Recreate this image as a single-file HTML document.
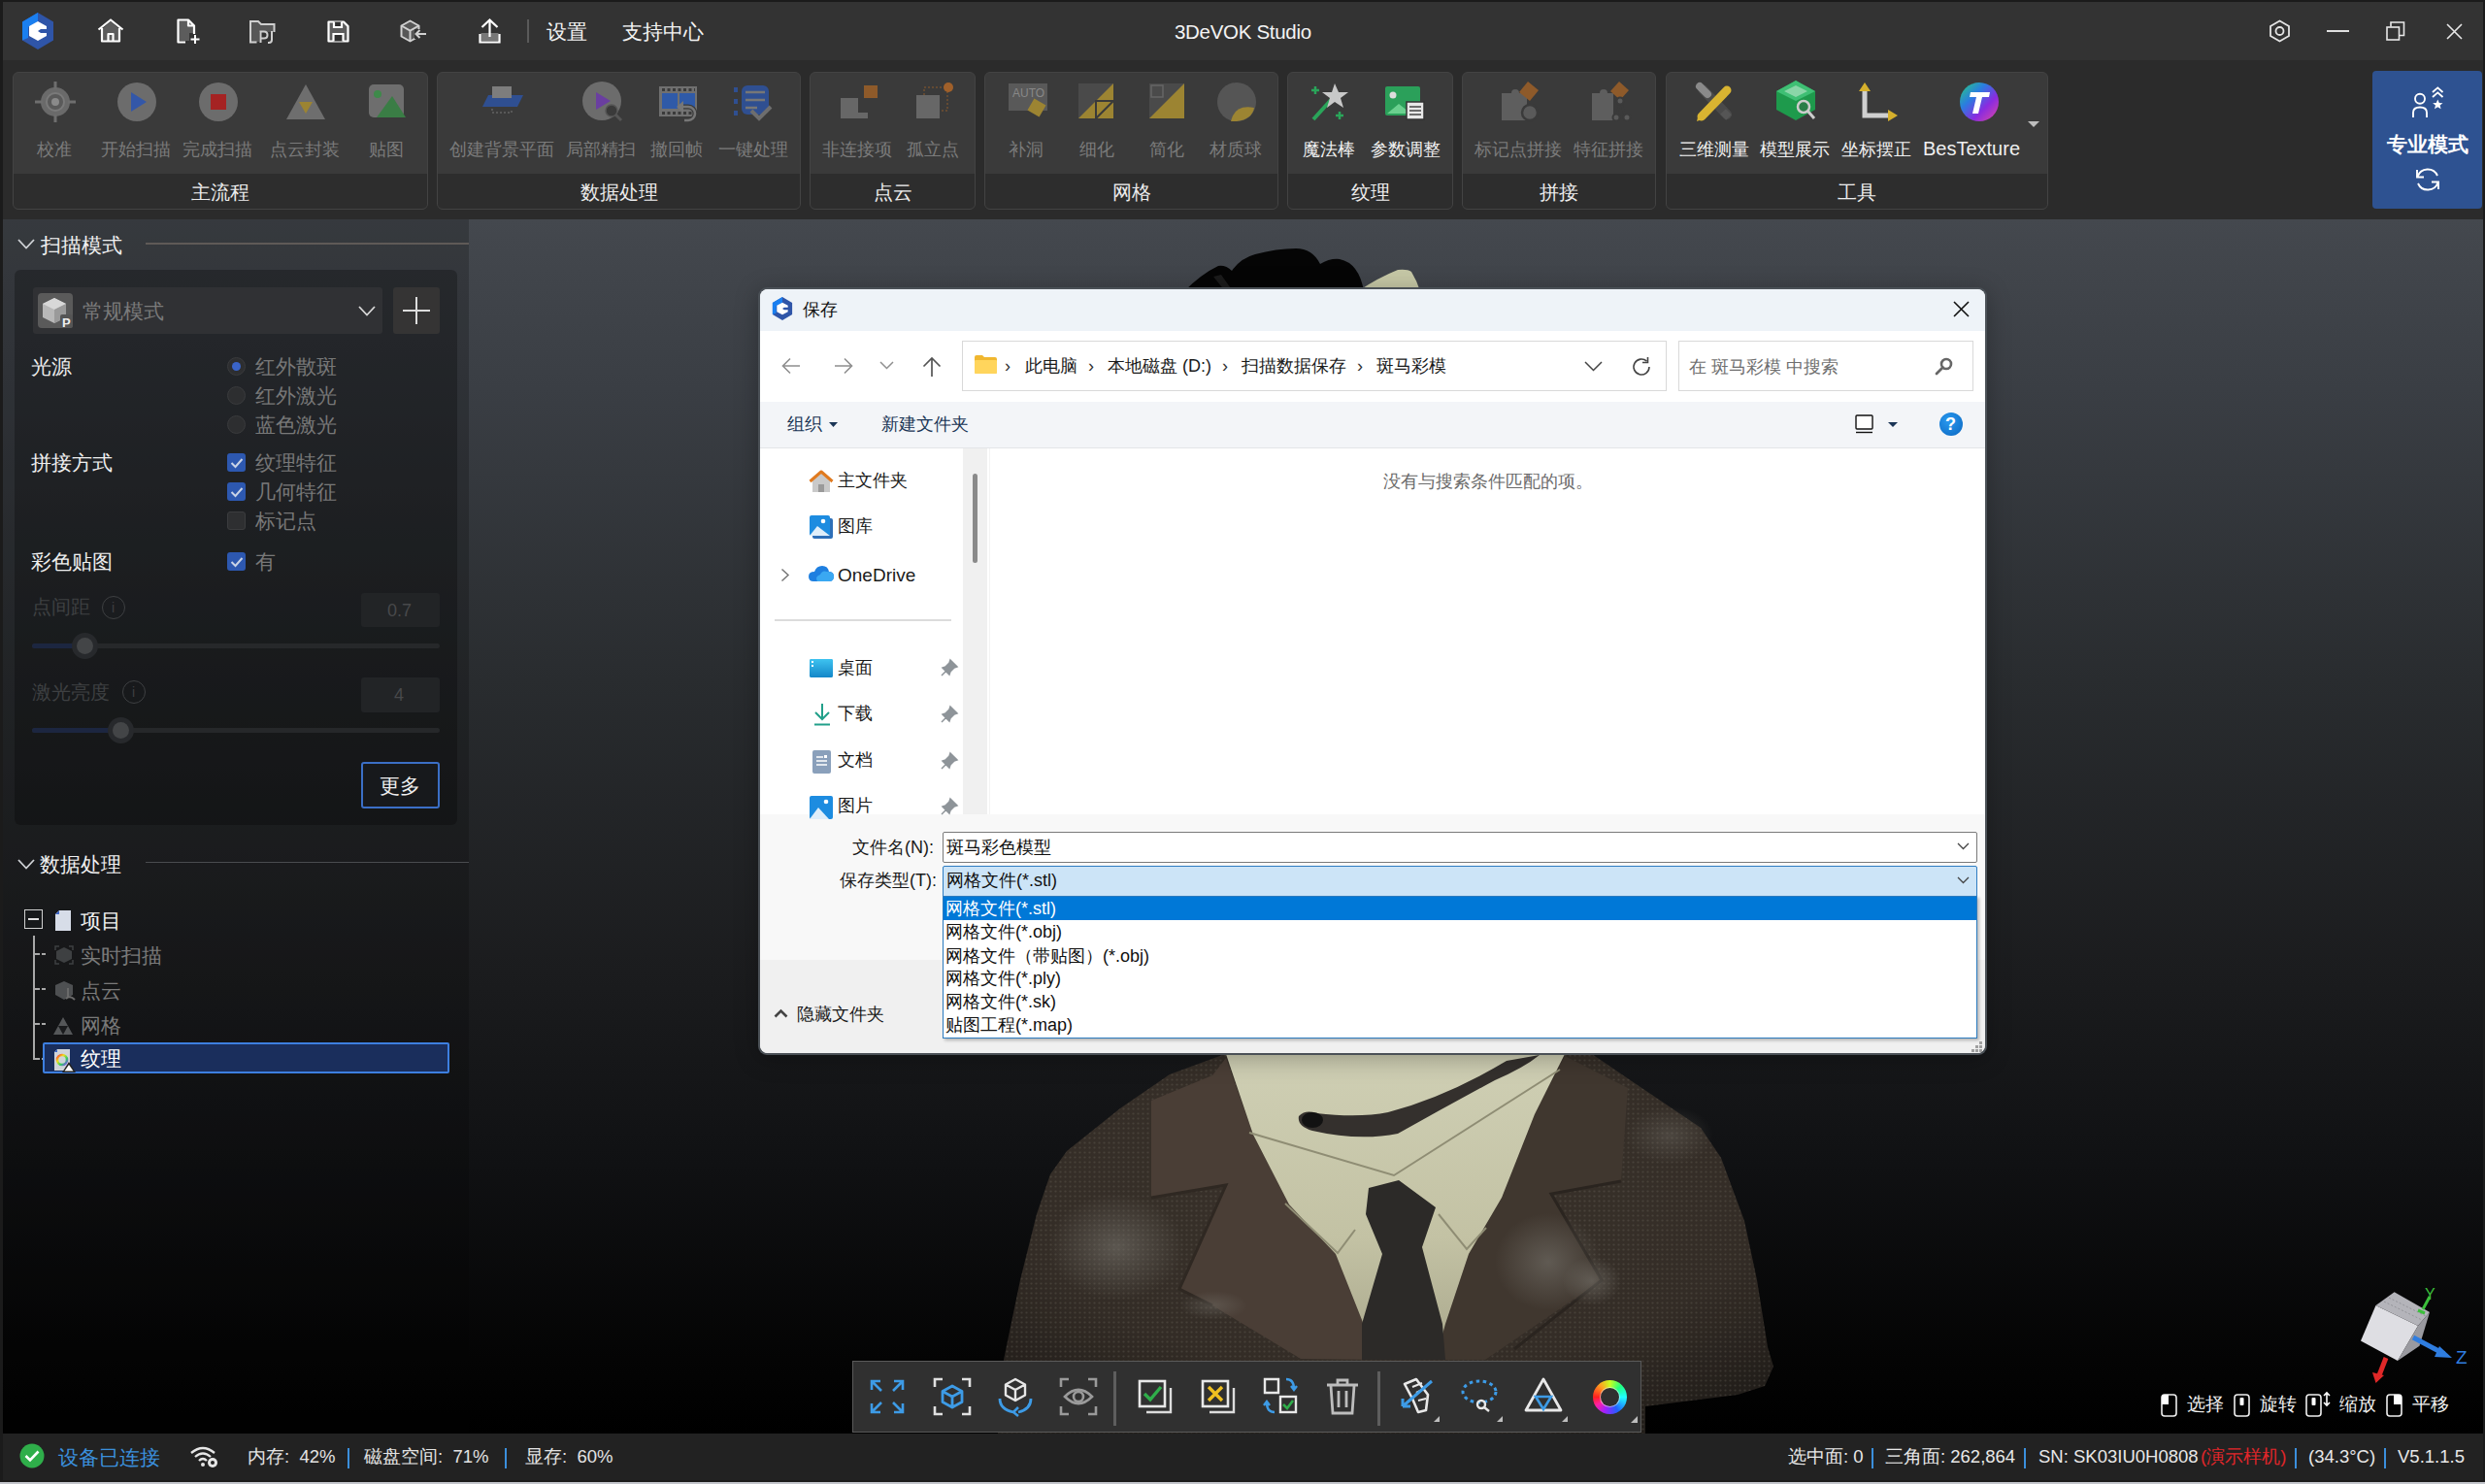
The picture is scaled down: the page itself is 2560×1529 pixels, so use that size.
<!DOCTYPE html>
<html><head><meta charset="utf-8">
<style>
*{box-sizing:border-box;margin:0;padding:0}
html,body{width:2560px;height:1529px;overflow:hidden;background:#1b1b1b;font-family:"Liberation Sans",sans-serif}
.a{position:absolute}
.t{position:absolute;white-space:nowrap;line-height:1}
svg{position:absolute;overflow:visible}
#titlebar{position:absolute;left:3px;top:2px;width:2555px;height:60px;background:#333333}
#ribbon{position:absolute;left:3px;top:62px;width:2555px;height:164px;background:#2b2b2b}
.grp{position:absolute;top:74px;height:142px;border:1px solid #434343;border-radius:6px;background:#3a3a3a;overflow:hidden}
.grp .band{position:absolute;left:0;right:0;bottom:0;height:36px;background:#2d2d2d}
.grp .gl{position:absolute;left:0;right:0;bottom:7px;text-align:center;color:#ececec;font-size:20px;line-height:20px;white-space:nowrap}
.rl{position:absolute;top:145px;font-size:18px;line-height:18px;color:#7b7b7b;white-space:nowrap;transform:translateX(-50%)}
.rl.on{color:#f0f0f0}
#viewport{position:absolute;left:3px;top:226px;width:2555px;height:1251px;background:linear-gradient(#44484e 0%,#3a3e44 13.9%,#292c2f 37.9%,#1b1c1e 61.9%,#101113 77.9%,#040404 93.8%,#000 100%)}
#status{position:absolute;left:3px;top:1477px;width:2555px;height:48px;background:#222222}
#botline{position:absolute;left:0;top:1527px;width:2560px;height:2px;background:#c4c6cc}
</style></head><body>

<!-- ============ TITLE BAR ============ -->
<div id="titlebar"></div>
<!-- logo -->
<svg style="left:22px;top:13px" width="34" height="38" viewBox="0 0 34 38">
  <polygon points="17,0 33,9.5 33,28.5 17,38 1,28.5 1,9.5" fill="#2f55a8"/>
  <polygon points="17,0 17,9 7,15 7,26 1,28.5 1,9.5" fill="#1a7ff0"/>
  <polygon points="17,9 26,14 26,17 20,17 17,19 20,21 26,21 26,24 17,29 8,24 8,14" fill="#fff"/>
</svg>
<!-- home -->
<svg style="left:100px;top:19px" width="28" height="25" viewBox="0 0 28 25">
  <path d="M5,11 V23 H23 V11 L14,3 Z" fill="#5c5c5c"/>
  <path d="M1.5,11.5 L14,1.5 L26.5,11.5 M5,10 V23.5 H23 V10 M11.5,23.5 V16 H16.5 V23.5" fill="none" stroke="#fff" stroke-width="2.2" stroke-linejoin="round"/>
</svg>
<!-- new file -->
<svg style="left:182px;top:19px" width="24" height="27" viewBox="0 0 24 27">
  <path d="M1.5,1.5 H12 L17,6.5 V15 H13 V23 H1.5 Z" fill="#5c5c5c"/>
  <path d="M9,24.5 H1.5 V1.5 H12 L18,7.5 V16 M12,1.5 V7.5 H18" fill="none" stroke="#fff" stroke-width="2.2" stroke-linejoin="round"/>
  <path d="M19,17 V26 M14.5,21.5 H23.5" stroke="#fff" stroke-width="2"/>
</svg>
<!-- project folder -->
<svg style="left:257px;top:21px" width="27" height="24" viewBox="0 0 27 24">
  <path d="M1,1 H9 L12,4 H25 V12 H10 V22 H1 Z" fill="#575757"/>
  <path d="M7.5,22.5 H1 V1 H9 L12,4 H25.5 V12" fill="none" stroke="#cfcfcf" stroke-width="2"/>
  <path d="M11.5,23 V11.5 H15 Q18.5,11.5 18.5,15 Q18.5,18.5 15,18.5 H11.5" fill="none" stroke="#cfcfcf" stroke-width="2"/>
  <path d="M23,11 V20 Q23,23 20,23 H19" fill="none" stroke="#cfcfcf" stroke-width="2"/>
</svg>
<!-- save -->
<svg style="left:337px;top:21px" width="23" height="23" viewBox="0 0 23 23">
  <path d="M1.5,1.5 H17 L21.5,6 V21.5 H1.5 Z" fill="#5c5c5c" stroke="#fff" stroke-width="2.2" stroke-linejoin="round"/>
  <path d="M7,1.5 V7 H15 V1.5 M6.5,21.5 V14 H16.5 V21.5" fill="#2f2f2f" stroke="#fff" stroke-width="2.2"/>
</svg>
<!-- import cube -->
<svg style="left:412px;top:20px" width="28" height="25" viewBox="0 0 28 25">
  <path d="M10.5,1.5 L19.5,6.5 V17.5 L10.5,22.5 L1.5,17.5 V6.5 Z" fill="#575757" stroke="#d0d0d0" stroke-width="2" stroke-linejoin="round"/>
  <path d="M1.5,6.5 L10.5,11.5 L19.5,6.5 M10.5,11.5 V22.5" fill="none" stroke="#d0d0d0" stroke-width="2"/>
  <rect x="15" y="10" width="13" height="10" fill="#333"/>
  <path d="M27,15 H17 M20.5,11 L16.5,15 L20.5,19" fill="none" stroke="#d0d0d0" stroke-width="2"/>
</svg>
<!-- export -->
<svg style="left:493px;top:19px" width="23" height="26" viewBox="0 0 23 26">
  <rect x="2.5" y="15" width="18" height="8" fill="#777"/>
  <path d="M1.5,16 V24.5 H21.5 V16" fill="none" stroke="#fff" stroke-width="2.2"/>
  <path d="M11.5,19 V2 M3.5,9 L11.5,1.5 L19.5,9" fill="none" stroke="#fff" stroke-width="2.2"/>
</svg>
<div class="a" style="left:543px;top:20px;width:2px;height:24px;background:#5a5a5a"></div>
<div class="t" style="left:563px;top:22px;font-size:21px;color:#f2f2f2">设置</div>
<div class="t" style="left:641px;top:22px;font-size:21px;color:#f2f2f2">支持中心</div>
<div class="t" style="left:1210px;top:23px;font-size:20.5px;color:#f4f4f4;letter-spacing:-0.3px">3DeVOK Studio</div>
<!-- right window buttons -->
<svg style="left:2337px;top:20px" width="23" height="24" viewBox="0 0 23 24">
  <polygon points="11.5,1.5 21,7 21,17 11.5,22.5 2,17 2,7" fill="none" stroke="#e4e4e4" stroke-width="1.8"/>
  <circle cx="11.5" cy="12" r="4" fill="none" stroke="#e4e4e4" stroke-width="1.8"/>
</svg>
<div class="a" style="left:2397px;top:31px;width:23px;height:2px;background:#e0e0e0"></div>
<svg style="left:2458px;top:22px" width="20" height="20" viewBox="0 0 20 20">
  <rect x="1" y="6" width="12.5" height="13" fill="none" stroke="#e8e8e8" stroke-width="1.6"/>
  <path d="M5,5.5 V1 H18.5 V14.5 H14" fill="none" stroke="#e8e8e8" stroke-width="1.6"/>
</svg>
<svg style="left:2520px;top:24px" width="17" height="17" viewBox="0 0 17 17">
  <path d="M1,1 L16,16 M16,1 L1,16" stroke="#e8e8e8" stroke-width="1.6"/>
</svg>

<!-- ============ RIBBON ============ -->
<div id="ribbon"></div>
<div class="grp" style="left:13px;width:428px"><div class="band"></div><div class="gl">主流程</div></div>
<div class="grp" style="left:450px;width:375px"><div class="band"></div><div class="gl">数据处理</div></div>
<div class="grp" style="left:834px;width:171px"><div class="band"></div><div class="gl">点云</div></div>
<div class="grp" style="left:1014px;width:303px"><div class="band"></div><div class="gl">网格</div></div>
<div class="grp" style="left:1326px;width:171px"><div class="band"></div><div class="gl">纹理</div></div>
<div class="grp" style="left:1506px;width:200px"><div class="band"></div><div class="gl">拼接</div></div>
<div class="grp" style="left:1716px;width:394px"><div class="band"></div><div class="gl">工具</div></div>

<div class="rl" style="left:56px">校准</div>
<div class="rl" style="left:140px">开始扫描</div>
<div class="rl" style="left:224px">完成扫描</div>
<div class="rl" style="left:314px">点云封装</div>
<div class="rl" style="left:398px">贴图</div>
<div class="rl" style="left:517px">创建背景平面</div>
<div class="rl" style="left:619px">局部精扫</div>
<div class="rl" style="left:697px">撤回帧</div>
<div class="rl" style="left:776px">一键处理</div>
<div class="rl" style="left:883px">非连接项</div>
<div class="rl" style="left:961px">孤立点</div>
<div class="rl" style="left:1057px">补洞</div>
<div class="rl" style="left:1130px">细化</div>
<div class="rl" style="left:1202px">简化</div>
<div class="rl" style="left:1273px">材质球</div>
<div class="rl on" style="left:1369px">魔法棒</div>
<div class="rl on" style="left:1448px">参数调整</div>
<div class="rl" style="left:1564px">标记点拼接</div>
<div class="rl" style="left:1657px">特征拼接</div>
<div class="rl on" style="left:1766px">三维测量</div>
<div class="rl on" style="left:1849px">模型展示</div>
<div class="rl on" style="left:1933px">坐标摆正</div>
<div class="rl on" style="left:2031px;font-size:20px;top:144px">BesTexture</div>

<!-- ribbon icons -->
<!-- 校准 -->
<svg style="left:35px;top:83px" width="44" height="44" viewBox="0 0 44 44">
  <circle cx="22" cy="22" r="15" fill="#6a6a6a"/><circle cx="22" cy="22" r="9" fill="#5a5a5a" stroke="#7a7a7a" stroke-width="2"/><circle cx="22" cy="22" r="4" fill="#8a8a8a"/>
  <path d="M22,1 V9 M22,35 V43 M1,22 H9 M35,22 H43" stroke="#6e6e6e" stroke-width="3"/>
</svg>
<!-- 开始扫描 -->
<svg style="left:120px;top:84px" width="42" height="42" viewBox="0 0 42 42">
  <circle cx="21" cy="21" r="20" fill="#6c6c6c"/><polygon points="15,11 31,21 15,31" fill="#3357a8"/>
</svg>
<!-- 完成扫描 -->
<svg style="left:204px;top:84px" width="42" height="42" viewBox="0 0 42 42">
  <circle cx="21" cy="21" r="20" fill="#6c6c6c"/><rect x="13" y="13" width="16" height="16" fill="#a52323"/>
</svg>
<!-- 点云封装 -->
<svg style="left:294px;top:86px" width="42" height="38" viewBox="0 0 42 38">
  <polygon points="21,1 41,37 1,37" fill="#6e6e6e"/><polygon points="14,19 28,19 21,31" fill="#9c8432"/>
</svg>
<!-- 贴图 -->
<svg style="left:380px;top:87px" width="38" height="36" viewBox="0 0 38 36">
  <rect x="0" y="0" width="36" height="34" rx="5" fill="#6e6e6e"/><circle cx="9" cy="10" r="4" fill="#3e8a4a"/><polygon points="8,34 24,12 38,34" fill="#3a7d45"/>
</svg>
<!-- 创建背景平面 -->
<svg style="left:497px;top:88px" width="42" height="34" viewBox="0 0 42 34">
  <polygon points="6,10 42,10 36,22 0,22" fill="#2f4f91"/><rect x="10" y="1" width="20" height="12" fill="#7d7d7d"/><path d="M10,24 V28 H30 V24" fill="none" stroke="#777" stroke-width="1" stroke-dasharray="2,2"/>
</svg>
<!-- 局部精扫 -->
<svg style="left:600px;top:84px" width="42" height="42" viewBox="0 0 42 42">
  <circle cx="20" cy="20" r="20" fill="#6c6c6c"/><polygon points="14,11 29,20 14,29" fill="#6a3ea0"/><circle cx="30" cy="30" r="6" fill="#3a3a3a" stroke="#555" stroke-width="1.5"/><path d="M34,34 L40,40" stroke="#555" stroke-width="3"/>
</svg>
<!-- 撤回帧 -->
<svg style="left:679px;top:88px" width="42" height="40" viewBox="0 0 42 40">
  <rect x="0" y="1" width="39" height="31" fill="#707070"/>
  <rect x="3" y="8" width="16" height="16" fill="#2f5aa8"/><rect x="21" y="8" width="16" height="16" fill="#2f5aa8"/>
  <path d="M3,4.5 H37 M3,28.5 H37" stroke="#3a3a3a" stroke-width="3" stroke-dasharray="3,2.5"/>
  <path d="M22,22 H30 A7,7 0 0 1 30,36 H26" fill="none" stroke="#3a3a3a" stroke-width="5"/>
  <path d="M22,22 H30 A7,7 0 0 1 30,36 H26" fill="none" stroke="#777" stroke-width="2.5"/>
  <polygon points="18,22 25,16 25,28" fill="#777"/>
</svg>
<!-- 一键处理 -->
<svg style="left:756px;top:88px" width="42" height="38" viewBox="0 0 42 38">
  <rect x="0" y="2" width="4" height="5" fill="#2f4f91"/><rect x="0" y="14" width="4" height="5" fill="#2f4f91"/><rect x="0" y="26" width="4" height="5" fill="#2f4f91"/><rect x="8" y="0" width="28" height="30" rx="6" fill="#2f4f91"/><path d="M12,7 H32 M12,15 H32 M12,23 H24" stroke="#777" stroke-width="2.5"/><path d="M18,26 L26,34 L38,22" fill="none" stroke="#6e6e6e" stroke-width="4"/>
</svg>
<!-- 非连接项 -->
<svg style="left:866px;top:88px" width="38" height="34" viewBox="0 0 38 34">
  <path d="M0,14 H14 V0 H0 Z" fill="none"/><path d="M0,13 H14 V28 H28 V34 H0 Z" fill="#676767"/><rect x="0" y="13" width="18" height="21" fill="#676767"/><rect x="24" y="0" width="14" height="13" fill="#8e5a2a"/>
</svg>
<!-- 孤立点 -->
<svg style="left:944px;top:85px" width="40" height="38" viewBox="0 0 40 38">
  <rect x="0" y="13" width="24" height="24" fill="#676767"/><path d="M8,13 V5 H32 V29 H24" fill="none" stroke="#8e5a2a" stroke-width="1" stroke-dasharray="2,2"/><circle cx="33" cy="5" r="5" fill="#a0602a"/>
</svg>
<!-- 补洞 -->
<svg style="left:1039px;top:86px" width="42" height="38" viewBox="0 0 42 38">
  <rect x="0" y="0" width="40" height="28" fill="#595959"/><text x="4" y="14" font-size="12" fill="#888" font-family="Liberation Sans">AUTO</text><rect x="22" y="18" width="14" height="14" fill="#9c8432" transform="rotate(30 29 25)"/>
</svg>
<!-- 细化 -->
<svg style="left:1111px;top:86px" width="38" height="38" viewBox="0 0 38 38">
  <rect x="0" y="0" width="36" height="36" fill="#4a4a4a"/><polygon points="36,0 36,36 0,36" fill="#9c8432"/><path d="M18,36 V18 H36 M18,36 L36,18" stroke="#3a3a3a" stroke-width="2" fill="none"/>
</svg>
<!-- 简化 -->
<svg style="left:1184px;top:86px" width="38" height="38" viewBox="0 0 38 38">
  <rect x="0" y="0" width="36" height="36" fill="#4a4a4a"/><polygon points="36,0 36,36 0,36" fill="#9c8432"/><rect x="2" y="2" width="12" height="12" fill="none" stroke="#666" stroke-width="1.5"/>
</svg>
<!-- 材质球 -->
<svg style="left:1254px;top:85px" width="40" height="40" viewBox="0 0 40 40">
  <circle cx="20" cy="20" r="20" fill="#555"/><path d="M14,40 Q18,22 38,26 Q36,38 20,40 Z" fill="#9c8432"/>
</svg>
<!-- 魔法棒 -->
<svg style="left:1350px;top:85px" width="40" height="40" viewBox="0 0 40 40">
  <path d="M3,38 L22,17" stroke="#2aa55a" stroke-width="4"/><polygon points="25,1 29,10 39,10 31,16 34,26 25,20 17,26 20,16 12,10 22,10" fill="#c8c8c8"/><path d="M5,4 V12 M1,8 H9 M30,30 V38 M26,34 H34" stroke="#2aa55a" stroke-width="2.5"/>
</svg>
<!-- 参数调整 -->
<svg style="left:1427px;top:89px" width="42" height="36" viewBox="0 0 42 36">
  <rect x="0" y="0" width="36" height="30" rx="2" fill="#2ba05a"/><circle cx="8" cy="9" r="3.5" fill="#ddd"/><polygon points="2,28 14,18 24,26 34,16 34,28" fill="#6bd08f"/><rect x="22" y="16" width="18" height="18" fill="#e8e8e8" stroke="#333" stroke-width="1.5"/><path d="M25,21 H37 M25,25 H37 M25,29 H37" stroke="#444" stroke-width="1.5"/>
</svg>
<!-- 标记点拼接 -->
<svg style="left:1545px;top:83px" width="44" height="44" viewBox="0 0 44 44">
  <path d="M2,13 H12 Q12,9 16,9 Q20,9 20,13 H28 V26 Q32,26 32,30 Q32,34 28,34 V41 H2 Z" fill="#5e5e5e"/>
  <polygon points="29,1 40,10 31,21 20,12" fill="#8e5a2a"/>
  <circle cx="31" cy="33" r="8" fill="#5a5a5a" stroke="#3a3a3a" stroke-width="2.5"/>
</svg>
<!-- 特征拼接 -->
<svg style="left:1638px;top:83px" width="44" height="44" viewBox="0 0 44 44">
  <path d="M2,13 H10 Q10,9 14,9 Q18,9 18,13 H24 V41 H2 Z" fill="#5e5e5e"/>
  <polygon points="30,1 40,10 31,20 21,11" fill="#8e5a2a"/>
  <path d="M31,21 L27,38 M31,21 L37,38" stroke="#3a3a3a" stroke-width="2.5"/>
  <circle cx="31" cy="21" r="3.5" fill="#5a5a5a" stroke="#3a3a3a" stroke-width="2"/><circle cx="27" cy="38" r="3.5" fill="#5a5a5a" stroke="#3a3a3a" stroke-width="2"/><circle cx="38" cy="38" r="3.5" fill="#5a5a5a" stroke="#3a3a3a" stroke-width="2"/>
</svg>
<!-- 三维测量 -->
<svg style="left:1745px;top:84px" width="42" height="42" viewBox="0 0 42 42">
  <path d="M9,8 L34,34" stroke="#4a4a4a" stroke-width="10" stroke-linecap="round"/><path d="M6,5 L14,13" stroke="#8a8a8a" stroke-width="8" stroke-linecap="round"/><path d="M30,31 L36,37" stroke="#555" stroke-width="8"/>
  <path d="M8,36 L34,9" stroke="#d9b431" stroke-width="9" stroke-linecap="round"/><polygon points="3,41 5,33 11,38" fill="#d9b431"/>
</svg>
<!-- 模型展示 -->
<svg style="left:1830px;top:83px" width="42" height="42" viewBox="0 0 42 42">
  <polygon points="20,0 40,11 40,30 20,41 0,30 0,11" fill="#1e9a4c"/><polygon points="20,0 40,11 20,21 0,11" fill="#3fbf74"/><polygon points="20,5 32,11 20,17 8,11" fill="#8ad6a8"/><circle cx="28" cy="27" r="6" fill="#2a7d47" stroke="#ccc" stroke-width="2.5"/><path d="M32,31 L39,39" stroke="#ccc" stroke-width="3"/>
</svg>
<!-- 坐标摆正 -->
<svg style="left:1913px;top:85px" width="42" height="42" viewBox="0 0 42 42">
  <path d="M8,8 V34 H33" fill="none" stroke="#cfcfcf" stroke-width="5"/><polygon points="8,0 14,9 2,9" fill="#d6b02c"/><polygon points="42,34 32,28 32,40" fill="#d6b02c"/>
</svg>
<!-- BesTexture -->
<svg style="left:2018px;top:84px" width="42" height="42" viewBox="0 0 42 42">
  <defs><linearGradient id="bt" x1="0" y1="0" x2="1" y2="1"><stop offset="0" stop-color="#28d07a"/><stop offset="0.35" stop-color="#2a7de0"/><stop offset="0.65" stop-color="#8a2be0"/><stop offset="1" stop-color="#e04aa0"/></linearGradient></defs>
  <circle cx="21" cy="21" r="20" fill="url(#bt)"/><path d="M12,11 H32 L31,16 H24 L20,33 H14 L18,16 H11 Z" fill="#fff"/>
</svg>
<svg style="left:2089px;top:125px" width="12" height="7" viewBox="0 0 12 7"><polygon points="0,0 12,0 6,6" fill="#bdbdbd"/></svg>

<!-- pro mode -->
<div class="a" style="left:2444px;top:73px;width:113px;height:142px;background:#2e5291;border-radius:4px"></div>
<svg style="left:2480px;top:86px" width="44" height="40" viewBox="0 0 44 40">
  <circle cx="13" cy="15.8" r="5" fill="none" stroke="#fff" stroke-width="1.9"/>
  <path d="M6,35 V30 Q6,24.5 13,24.5 Q20,24.5 20,30 V35" fill="none" stroke="#fff" stroke-width="1.9"/>
  <path d="M26,9 L31.3,4.4 L36.5,9 M26,14 L31.3,9.4 L36.5,14" fill="none" stroke="#fff" stroke-width="1.9"/>
  <polygon points="31.3,16.5 32.8,20 36.5,20.2 33.6,22.6 34.6,26.2 31.3,24.2 28,26.2 29,22.6 26.1,20.2 29.8,20" fill="#fff"/>
</svg>
<div class="t" style="left:2459px;top:138px;font-size:21px;font-weight:bold;color:#fff">专业模式</div>
<svg style="left:2487px;top:171px" width="28" height="28" viewBox="0 0 28 28">
  <path d="M3.5,11 A11,11 0 0 1 24,10 M24.5,17 A11,11 0 0 1 4,18" fill="none" stroke="#fff" stroke-width="1.9"/>
  <path d="M3,4 V11.5 H10 M25,24 V16.5 H18" fill="none" stroke="#fff" stroke-width="1.9"/>
</svg>

<!-- ============ VIEWPORT ============ -->
<div id="viewport"></div>

<!-- ============ 3D MODEL ============ -->
<svg style="left:0;top:0" width="2560" height="1529" viewBox="0 0 2560 1529">
  <defs>
    <radialGradient id="jk" cx="0.5" cy="0.35" r="0.7"><stop offset="0" stop-color="#433a32"/><stop offset="0.7" stop-color="#3a322b"/><stop offset="1" stop-color="#27221e"/></radialGradient>
    <linearGradient id="sh" x1="0" y1="0" x2="0" y2="1"><stop offset="0" stop-color="#cfcfb4"/><stop offset="0.6" stop-color="#c3c2a4"/><stop offset="1" stop-color="#a9a78c"/></linearGradient>
    <pattern id="tex" width="5" height="5" patternUnits="userSpaceOnUse"><rect width="5" height="5" fill="#000" opacity="0.12"/><circle cx="2.5" cy="2.5" r="1.1" fill="#8a8278" opacity="0.22"/></pattern>
    <radialGradient id="hl" cx="0.5" cy="0.5" r="0.5"><stop offset="0" stop-color="#7a7770" stop-opacity="0.55"/><stop offset="1" stop-color="#7a7770" stop-opacity="0"/></radialGradient>
  </defs>
  <!-- hair -->
  <path d="M1220,300 Q1238,282 1255,274 Q1263,273 1269,279 Q1278,266 1293,262 Q1315,256 1335,256 Q1352,256 1360,272 Q1370,266 1380,267 Q1400,271 1405,300 Z" fill="#050505"/>
  <path d="M1250,285 L1262,300 L1270,300 L1258,283 Z" fill="#2a2a2a" opacity="0.6"/>
  <path d="M1399,300 Q1420,286 1440,278 Q1450,277 1454,280 Q1460,290 1463,300 Z" fill="#c6c8a6"/>
  <!-- jacket -->
  <path d="M1262,1086 L1205,1107 L1154,1142 L1099,1186 L1082,1210 L1068,1251 L1051,1319 L1034,1401 L1028,1477 L1695,1477 L1695,1449 L1790,1437 L1818,1428 L1827,1408 L1821,1388 L1810,1319 L1797,1258 L1773,1193 L1752,1162 L1681,1114 L1640,1086 Z" fill="url(#jk)"/>
  <path d="M1262,1086 L1205,1107 L1154,1142 L1099,1186 L1082,1210 L1068,1251 L1051,1319 L1034,1401 L1028,1477 L1695,1477 L1695,1449 L1790,1437 L1818,1428 L1827,1408 L1821,1388 L1810,1319 L1797,1258 L1773,1193 L1752,1162 L1681,1114 L1640,1086 Z" fill="url(#tex)"/>
  <!-- left lapel -->
  <path d="M1186,1134 L1249,1108 L1263,1090 L1291,1169 L1328,1241 L1376,1292 L1403,1360 L1417,1401 L1340,1400 L1249,1345 L1215,1328 L1263,1221 L1186,1234 Z" fill="#4a3e36"/>
  <path d="M1186,1234 L1263,1221 L1215,1328 L1249,1345" fill="none" stroke="#2f2822" stroke-width="3"/>
  <!-- right lapel -->
  <path d="M1612,1088 L1677,1121 L1670,1217 L1598,1230 L1650,1319 L1530,1401 L1479,1401 L1489,1364 L1513,1292 L1547,1234 L1581,1148 Z" fill="#40372f"/>
  <path d="M1670,1217 L1598,1230 L1650,1319 L1560,1390" fill="none" stroke="#2a241f" stroke-width="3"/>
  <!-- highlights -->
  <ellipse cx="1150" cy="1285" rx="70" ry="55" fill="url(#hl)"/>
  <ellipse cx="1595" cy="1300" rx="55" ry="50" fill="url(#hl)"/>
  <ellipse cx="1640" cy="1320" rx="30" ry="25" fill="url(#hl)"/>
  <ellipse cx="1720" cy="1170" rx="45" ry="30" fill="url(#hl)" opacity="0.6"/>
  <ellipse cx="1250" cy="1345" rx="35" ry="15" fill="url(#hl)" opacity="0.7"/>
  <!-- shirt -->
  <path d="M1263,1086 L1291,1169 L1328,1241 L1376,1292 L1403,1360 L1417,1401 L1479,1401 L1489,1364 L1513,1292 L1547,1234 L1581,1148 L1612,1086 Z" fill="url(#sh)"/>
  <path d="M1287,1167 L1436,1211 L1607,1102" fill="none" stroke="#8f8d74" stroke-width="2"/>
  <path d="M1324,1240 L1378,1291 L1396,1267" fill="none" stroke="#8f8d74" stroke-width="2"/>
  <path d="M1482,1251 L1511,1287 L1531,1265" fill="none" stroke="#8f8d74" stroke-width="2"/>
  <!-- neck stripe -->
  <path d="M1338,1150 Q1345,1143 1356,1147 Q1400,1152 1430,1146 Q1490,1130 1552,1093 L1586,1087 Q1570,1100 1540,1113 Q1490,1140 1440,1168 Q1400,1176 1352,1165 Q1336,1160 1338,1150 Z" fill="#34302d"/>
  <ellipse cx="1352" cy="1154" rx="11" ry="8" fill="#121212"/>
  <!-- tie -->
  <path d="M1410,1224 L1441,1216 L1479,1244 L1465,1285 L1486,1364 L1489,1401 L1403,1401 L1403,1364 L1424,1292 L1407,1251 Z" fill="#2c2a28"/>
</svg>

<!-- ============ LEFT PANEL ============ -->
<div class="a" style="left:3px;top:226px;width:480px;height:1251px;background:rgba(5,6,5,0.21)"></div>
<svg style="left:18px;top:246px" width="18" height="11" viewBox="0 0 18 11"><path d="M1,1 L9,9.5 L17,1" fill="none" stroke="#cfd2d6" stroke-width="1.8"/></svg>
<div class="t" style="left:42px;top:242px;font-size:21px;color:#f0f0f0">扫描模式</div>
<div class="a" style="left:150px;top:250px;width:333px;height:2px;background:#5f5a57"></div>
<div class="a" style="left:15px;top:278px;width:456px;height:572px;border-radius:6px;background:rgba(0,0,0,0.26)"></div>
<!-- dropdown -->
<div class="a" style="left:34px;top:296px;width:360px;height:48px;border-radius:3px;background:#303134"></div>
<div class="a" style="left:39px;top:302px;width:36px;height:36px;border-radius:4px;background:#5a5a5a"></div>
<svg style="left:42px;top:305px" width="34" height="34" viewBox="0 0 34 34">
  <polygon points="14,2 26,8 26,22 14,28 2,22 2,8" fill="#b8b8b8"/><polygon points="14,2 26,8 14,14 2,8" fill="#d8d8d8"/><polygon points="14,14 26,8 26,22 14,28" fill="#9a9a9a"/>
  <rect x="20" y="19" width="13" height="14" rx="2" fill="#555"/><text x="22" y="32" font-size="13" font-weight="bold" fill="#eee" font-family="Liberation Sans">P</text>
</svg>
<div class="t" style="left:85px;top:310px;font-size:21px;color:#7a7a7a">常规模式</div>
<svg style="left:369px;top:315px" width="18" height="11" viewBox="0 0 18 11"><path d="M1,1 L9,9.5 L17,1" fill="none" stroke="#d8d8d8" stroke-width="1.8"/></svg>
<div class="a" style="left:405px;top:296px;width:48px;height:48px;border-radius:3px;background:#353434"></div>
<div class="a" style="left:415px;top:319px;width:28px;height:2px;background:#dcdcdc"></div>
<div class="a" style="left:428px;top:306px;width:2px;height:28px;background:#dcdcdc"></div>
<!-- options -->
<div class="t" style="left:32px;top:367px;font-size:21px;color:#eeeeee">光源</div>
<div class="a" style="left:234px;top:368px;width:19px;height:19px;border-radius:50%;background:#2d2e30;border:1px solid #3a3b3d"></div>
<div class="a" style="left:239px;top:373px;width:9px;height:9px;border-radius:50%;background:#3a64c8"></div>
<div class="a" style="left:234px;top:398px;width:19px;height:19px;border-radius:50%;background:#2d2e30;border:1px solid #3a3b3d"></div>
<div class="a" style="left:234px;top:428px;width:19px;height:19px;border-radius:50%;background:#2d2e30;border:1px solid #3a3b3d"></div>
<div class="t" style="left:263px;top:367px;font-size:21px;color:#787878">红外散斑</div>
<div class="t" style="left:263px;top:397px;font-size:21px;color:#787878">红外激光</div>
<div class="t" style="left:263px;top:427px;font-size:21px;color:#787878">蓝色激光</div>
<div class="t" style="left:32px;top:466px;font-size:21px;color:#eeeeee">拼接方式</div>
<div class="a" style="left:234px;top:467px;width:19px;height:19px;border-radius:3px;background:#2d58b0"></div>
<div class="a" style="left:234px;top:497px;width:19px;height:19px;border-radius:3px;background:#2d58b0"></div>
<div class="a" style="left:234px;top:527px;width:19px;height:19px;border-radius:3px;background:#2e2f31;border:1px solid #3b3c3e"></div>
<svg style="left:237px;top:471px" width="14" height="12" viewBox="0 0 14 12"><path d="M1.5,6 L5.5,10 L12.5,2" fill="none" stroke="#c9d3e6" stroke-width="2"/></svg>
<svg style="left:237px;top:501px" width="14" height="12" viewBox="0 0 14 12"><path d="M1.5,6 L5.5,10 L12.5,2" fill="none" stroke="#c9d3e6" stroke-width="2"/></svg>
<div class="t" style="left:263px;top:466px;font-size:21px;color:#787878">纹理特征</div>
<div class="t" style="left:263px;top:496px;font-size:21px;color:#787878">几何特征</div>
<div class="t" style="left:263px;top:526px;font-size:21px;color:#787878">标记点</div>
<div class="t" style="left:32px;top:568px;font-size:21px;color:#eeeeee">彩色贴图</div>
<div class="a" style="left:234px;top:569px;width:19px;height:19px;border-radius:3px;background:#2d58b0"></div>
<svg style="left:237px;top:573px" width="14" height="12" viewBox="0 0 14 12"><path d="M1.5,6 L5.5,10 L12.5,2" fill="none" stroke="#c9d3e6" stroke-width="2"/></svg>
<div class="t" style="left:263px;top:568px;font-size:21px;color:#787878">有</div>
<!-- sliders (disabled) -->
<div class="t" style="left:33px;top:615px;font-size:20px;color:#3e4042">点间距</div>
<div class="a" style="left:105px;top:614px;width:24px;height:24px;border-radius:50%;border:1.5px solid #3e4042"></div>
<div class="t" style="left:115px;top:619px;font-size:14px;color:#3e4042">i</div>
<div class="a" style="left:372px;top:611px;width:81px;height:35px;border-radius:3px;background:#222426"></div>
<div class="t" style="left:399px;top:620px;font-size:18px;color:#48494b">0.7</div>
<div class="a" style="left:33px;top:663px;width:420px;height:5px;border-radius:3px;background:#26282a"></div>
<div class="a" style="left:33px;top:663px;width:54px;height:5px;border-radius:3px;background:#1c2640"></div>
<div class="a" style="left:74px;top:652px;width:27px;height:27px;border-radius:50%;background:#27292c"></div>
<div class="a" style="left:79px;top:657px;width:17px;height:17px;border-radius:50%;background:#434547"></div>
<div class="t" style="left:33px;top:703px;font-size:20px;color:#3e4042">激光亮度</div>
<div class="a" style="left:126px;top:701px;width:24px;height:24px;border-radius:50%;border:1.5px solid #3e4042"></div>
<div class="t" style="left:136px;top:706px;font-size:14px;color:#3e4042">i</div>
<div class="a" style="left:372px;top:698px;width:81px;height:36px;border-radius:3px;background:#222426"></div>
<div class="t" style="left:406px;top:707px;font-size:18px;color:#48494b">4</div>
<div class="a" style="left:33px;top:750px;width:420px;height:5px;border-radius:3px;background:#26282a"></div>
<div class="a" style="left:33px;top:750px;width:91px;height:5px;border-radius:3px;background:#1c2640"></div>
<div class="a" style="left:111px;top:739px;width:27px;height:27px;border-radius:50%;background:#27292c"></div>
<div class="a" style="left:116px;top:744px;width:17px;height:17px;border-radius:50%;background:#434547"></div>
<div class="a" style="left:372px;top:785px;width:81px;height:48px;border:2px solid #3b6fc6;border-radius:3px;background:#17191c"></div>
<div class="t" style="left:391px;top:799px;font-size:21px;color:#eeeeee">更多</div>
<!-- data processing -->
<svg style="left:18px;top:885px" width="18" height="11" viewBox="0 0 18 11"><path d="M1,1 L9,9.5 L17,1" fill="none" stroke="#cfd2d6" stroke-width="1.8"/></svg>
<div class="t" style="left:41px;top:880px;font-size:21px;color:#f0f0f0">数据处理</div>
<div class="a" style="left:150px;top:888px;width:333px;height:1px;background:#4a4c4f"></div>
<div class="a" style="left:25px;top:937px;width:19px;height:20px;border:1.5px solid #d0d0d0;background:#17191b"></div>
<div class="a" style="left:29px;top:946px;width:11px;height:2px;background:#e0e0e0"></div>
<svg style="left:56px;top:938px" width="18" height="22" viewBox="0 0 18 22"><path d="M5,0 H17 V21 H1 V4 Z" fill="#d7dde8"/><polygon points="1,4 5,0 5,4" fill="#3a64c8"/></svg>
<div class="t" style="left:83px;top:938px;font-size:21px;color:#f0f0f0">项目</div>
<div class="a" style="left:34px;top:964px;width:2px;height:128px;background:#a8a8a8"></div>
<div class="a" style="left:34px;top:982px;width:7px;height:2px;background:#a8a8a8"></div><div class="a" style="left:43px;top:982px;width:4px;height:2px;background:#a8a8a8"></div>
<div class="a" style="left:34px;top:1018px;width:7px;height:2px;background:#a8a8a8"></div><div class="a" style="left:43px;top:1018px;width:4px;height:2px;background:#a8a8a8"></div>
<div class="a" style="left:34px;top:1054px;width:7px;height:2px;background:#a8a8a8"></div><div class="a" style="left:43px;top:1054px;width:4px;height:2px;background:#a8a8a8"></div>
<div class="a" style="left:34px;top:1090px;width:7px;height:2px;background:#a8a8a8"></div><div class="a" style="left:43px;top:1090px;width:4px;height:2px;background:#a8a8a8"></div>
<svg style="left:56px;top:974px" width="20" height="20" viewBox="0 0 20 20"><polygon points="10,2 18,6 18,14 10,18 2,14 2,6" fill="#3e4042"/><path d="M1,5 V1 H5 M15,1 H19 V5 M19,15 V19 H15 M5,19 H1 V15" fill="none" stroke="#3e4042" stroke-width="1.5"/></svg>
<div class="t" style="left:83px;top:974px;font-size:21px;color:#7a7a7a">实时扫描</div>
<svg style="left:56px;top:1010px" width="22" height="22" viewBox="0 0 22 22"><polygon points="10,1 19,5 19,15 10,20 1,15 1,5" fill="#4e5052"/><path d="M14,8 V18 M12,19 Q16,15 21,20" fill="none" stroke="#6a6a6a" stroke-width="2"/></svg>
<div class="t" style="left:83px;top:1010px;font-size:21px;color:#7a7a7a">点云</div>
<svg style="left:55px;top:1048px" width="20" height="18" viewBox="0 0 20 18"><polygon points="10,0 20,18 0,18" fill="#555759"/><polygon points="5,9 15,9 10,18" fill="#1a1b1d"/></svg>
<div class="t" style="left:83px;top:1046px;font-size:21px;color:#7a7a7a">网格</div>
<div class="a" style="left:44px;top:1074px;width:419px;height:32px;border:2px solid #3d7fe0;border-radius:2px;background:#1a2e5c"></div>
<svg style="left:56px;top:1081px" width="22" height="24" viewBox="0 0 22 24"><path d="M3,0 H16 V22 H0 V3 Z" fill="#d0d4da"/><polygon points="0,3 3,0 3,3" fill="#3a64c8"/><circle cx="8" cy="11" r="5" fill="none" stroke="url(#twh)" stroke-width="2.6"/><defs><linearGradient id="twh" x1="0" y1="0" x2="1" y2="1"><stop offset="0" stop-color="#ff3030"/><stop offset="0.33" stop-color="#f0e020"/><stop offset="0.66" stop-color="#30d060"/><stop offset="1" stop-color="#8040ff"/></linearGradient></defs><polygon points="15,13 22,24 8,24" fill="#222"/><polygon points="15,16 19.5,22.5 10.5,22.5" fill="#fff"/></svg>
<div class="t" style="left:83px;top:1080px;font-size:21px;color:#ffffff">纹理</div>



<!-- ============ BOTTOM TOOLBAR ============ -->
<div class="a" style="left:878px;top:1402px;width:813px;height:74px;background:#303030;border:1px solid #5a5a5a"></div>
<div class="a" style="left:1147px;top:1413px;width:3px;height:56px;background:#5e5e5e"></div>
<div class="a" style="left:1419px;top:1413px;width:3px;height:56px;background:#5e5e5e"></div>
<!-- fit -->
<svg style="left:896px;top:1421px" width="36" height="36" viewBox="0 0 36 36"><path d="M2,11 V2 H11 M2,2 L12,12 M25,2 H34 V11 M34,2 L24,12 M2,25 V34 H11 M2,34 L12,24 M34,25 V34 H25 M34,34 L24,24" fill="none" stroke="#3d9be6" stroke-width="2.6"/></svg>
<!-- box cube -->
<svg style="left:962px;top:1420px" width="38" height="38" viewBox="0 0 38 38"><path d="M1,9 V1 H9 M29,1 H37 V9 M1,29 V37 H9 M29,37 H37 V29" fill="none" stroke="#e0e0e0" stroke-width="2.6"/><path d="M19,8 L29,13.5 V24.5 L19,30 L9,24.5 V13.5 Z M9,13.5 L19,19 L29,13.5 M19,19 V30" fill="none" stroke="#3d9be6" stroke-width="2.8" stroke-linejoin="round"/></svg>
<!-- rotate cube -->
<svg style="left:1027px;top:1419px" width="38" height="40" viewBox="0 0 38 40"><path d="M19,2 L29,7.5 V18.5 L19,24 L9,18.5 V7.5 Z M9,7.5 L19,13 L29,7.5 M19,13 V24" fill="none" stroke="#e6e6e6" stroke-width="2.4" stroke-linejoin="round"/><path d="M3,22 Q3,33 17,36 M35,22 Q35,33 22,36" fill="none" stroke="#3d9be6" stroke-width="2.8"/><path d="M22,31 L17,36 L22,40" fill="none" stroke="#3d9be6" stroke-width="2.6"/></svg>
<!-- eye -->
<svg style="left:1092px;top:1420px" width="38" height="38" viewBox="0 0 38 38"><path d="M1,9 V1 H9 M29,1 H37 V9 M1,29 V37 H9 M29,37 H37 V29" fill="none" stroke="#9a9a9a" stroke-width="2.6"/><path d="M5,19 Q19,5 33,19 Q19,33 5,19 Z" fill="none" stroke="#9a9a9a" stroke-width="2.6"/><circle cx="19" cy="19" r="5" fill="none" stroke="#9a9a9a" stroke-width="2.6"/></svg>
<!-- select all -->
<svg style="left:1172px;top:1421px" width="36" height="36" viewBox="0 0 36 36"><path d="M9,34 H34 V9" fill="none" stroke="#dcdcdc" stroke-width="2.4"/><rect x="2" y="2" width="26" height="26" fill="#303030" stroke="#e8e8e8" stroke-width="2.6"/><path d="M7,15 L13,21 L24,8" fill="none" stroke="#2fae4a" stroke-width="3.4"/></svg>
<!-- deselect -->
<svg style="left:1237px;top:1421px" width="36" height="36" viewBox="0 0 36 36"><path d="M9,34 H34 V9" fill="none" stroke="#dcdcdc" stroke-width="2.4"/><rect x="2" y="2" width="26" height="26" fill="#303030" stroke="#e8e8e8" stroke-width="2.6"/><path d="M8,8 L22,22 M22,8 L8,22" fill="none" stroke="#f0c020" stroke-width="3.4"/></svg>
<!-- invert -->
<svg style="left:1301px;top:1419px" width="36" height="38" viewBox="0 0 36 38"><path d="M2,2 H16 V16 H2 Z" fill="none" stroke="#e8e8e8" stroke-width="2.4"/><rect x="18" y="20" width="16" height="16" fill="none" stroke="#e8e8e8" stroke-width="2.4"/><path d="M21,28 L25,32 L31,24" fill="none" stroke="#2fae4a" stroke-width="2.6"/><path d="M24,2 Q32,2 32,12 M29,9 L32,13 L35,9 M12,36 Q4,36 4,26 M1,29 L4,25 L7,29" fill="none" stroke="#3d9be6" stroke-width="2.4"/></svg>
<!-- trash -->
<svg style="left:1366px;top:1420px" width="34" height="38" viewBox="0 0 34 38"><path d="M1,7 H33 M12,7 V2 H22 V7 M5,8 L7,36 H27 L29,8 M13,13 V30 M21,13 V30" fill="none" stroke="#bdbdbd" stroke-width="2.8"/></svg>
<!-- brush select -->
<svg style="left:1441px;top:1419px" width="42" height="48" viewBox="0 0 42 48"><path d="M6,7 L18,2 L30,18 L28,34 L20,36 L14,22 Z" fill="none" stroke="#e8e8e8" stroke-width="2.6" stroke-linejoin="round"/><path d="M14,10 L24,6 M18,16 L26,12 M20,24 L28,22" stroke="#e8e8e8" stroke-width="2"/><path d="M34,4 L4,30 M4,30 V22 M4,30 H12" fill="none" stroke="#3d9be6" stroke-width="3"/><polygon points="42,40 42,46 36,46" fill="#bdbdbd"/></svg>
<!-- lasso -->
<svg style="left:1504px;top:1419px" width="44" height="48" viewBox="0 0 44 48"><ellipse cx="20" cy="15" rx="17" ry="11" fill="none" stroke="#3d9be6" stroke-width="3" stroke-dasharray="3.5,3.5"/><circle cx="22" cy="28" r="4" fill="none" stroke="#e8e8e8" stroke-width="2.4"/><path d="M25,31 L30,35" stroke="#e8e8e8" stroke-width="2.4"/><polygon points="44,40 44,46 38,46" fill="#bdbdbd"/></svg>
<!-- triangle -->
<svg style="left:1571px;top:1419px" width="44" height="48" viewBox="0 0 44 48"><polygon points="19,2 37,34 1,34" fill="none" stroke="#e8e8e8" stroke-width="2.8" stroke-linejoin="round"/><polygon points="11,20 27,20 19,33" fill="none" stroke="#3d9be6" stroke-width="2.6"/><polygon points="44,40 44,46 38,46" fill="#bdbdbd"/></svg>
<!-- color wheel -->
<div class="a" style="left:1641px;top:1422px;width:35px;height:35px;border-radius:50%;background:conic-gradient(#c8ff20,#20ff80 45deg,#20ffff 90deg,#2060ff 150deg,#a020ff 200deg,#ff20a0 240deg,#ff2020 270deg,#ffa020 320deg,#c8ff20)"></div>
<div class="a" style="left:1649px;top:1430px;width:19px;height:19px;border-radius:50%;background:#303030;box-shadow:0 0 0 1px rgba(255,255,255,0.5)"></div>
<svg style="left:1680px;top:1459px" width="7" height="7" viewBox="0 0 7 7"><polygon points="7,0 7,7 0,7" fill="#bdbdbd"/></svg>

<!-- ============ VIEW CUBE ============ -->
<svg style="left:2420px;top:1325px" width="130" height="110" viewBox="0 0 130 110">
  <polygon points="27.5,20 71,41 50,77 12,56.5" fill="#dedee3"/>
  <polygon points="27.5,20 46.6,6.3 83,27 71,41" fill="#b4b4ba"/>
  <polygon points="71,41 83,27 72.5,61.7 50,77" fill="#9a9aa0"/>
  <path d="M36,16 L75,35 M41,12 L79,31" stroke="#8a8a90" stroke-width="0.8" stroke-dasharray="2,2"/>
  <path d="M76,24 L83,11" stroke="#3bbf3b" stroke-width="3"/><path d="M71,25 L78,28" stroke="#3bbf3b" stroke-width="3"/>
  <text x="78" y="14" font-size="16" fill="#3bbf3b" font-family="Liberation Sans">Y</text>
  <path d="M66,53 L98,70" stroke="#2f7de0" stroke-width="5"/><polygon points="93,62 106,74 88,73" fill="#2f7de0"/>
  <text x="110" y="80" font-size="19" fill="#2f7de0" font-family="Liberation Sans">Z</text>
  <path d="M38,74 L31,92" stroke="#e02828" stroke-width="5"/><polygon points="24,89 27.5,100 36,92" fill="#e02828"/>
</svg>

<!-- ============ MOUSE HINTS ============ -->
<svg style="left:2226px;top:1436px" width="17" height="24" viewBox="0 0 17 24"><rect x="1" y="1" width="15" height="22" rx="3" fill="none" stroke="#eee" stroke-width="1.6"/><rect x="1" y="1" width="7" height="10" fill="#fff"/></svg>
<div class="t" style="left:2253px;top:1437px;font-size:19px;color:#f0f0f0">选择</div>
<svg style="left:2301px;top:1436px" width="17" height="24" viewBox="0 0 17 24"><rect x="1" y="1" width="15" height="22" rx="3" fill="none" stroke="#eee" stroke-width="1.6"/><rect x="6.5" y="4" width="4" height="8" rx="1" fill="#fff"/></svg>
<div class="t" style="left:2328px;top:1437px;font-size:19px;color:#f0f0f0">旋转</div>
<svg style="left:2375px;top:1434px" width="27" height="26" viewBox="0 0 27 26"><rect x="1" y="3" width="15" height="22" rx="3" fill="none" stroke="#eee" stroke-width="1.6"/><rect x="6.5" y="6" width="4" height="8" rx="1" fill="#fff"/><path d="M22,1 V14 M19,4 L22,1 L25,4 M19,11 L22,14 L25,11" fill="none" stroke="#fff" stroke-width="1.6"/></svg>
<div class="t" style="left:2410px;top:1437px;font-size:19px;color:#f0f0f0">缩放</div>
<svg style="left:2458px;top:1436px" width="17" height="24" viewBox="0 0 17 24"><rect x="1" y="1" width="15" height="22" rx="3" fill="none" stroke="#eee" stroke-width="1.6"/><rect x="8" y="1" width="8" height="10" fill="#fff"/></svg>
<div class="t" style="left:2485px;top:1437px;font-size:19px;color:#f0f0f0">平移</div>

<!-- ============ SAVE DIALOG ============ -->
<div class="a" style="left:781px;top:296px;width:1266px;height:791px;border-radius:9px;background:#4b5157;box-shadow:0 4px 24px rgba(0,0,0,0.28)"></div>
<div class="a" style="left:783px;top:298px;width:1262px;height:787px;border-radius:8px;background:#ffffff;overflow:hidden">
  <div class="a" style="left:0;top:0;width:1262px;height:43px;background:#eef3f8"></div>
  <div class="a" style="left:0;top:116px;width:1262px;height:48px;background:#f3f5f8;border-bottom:1px solid #e3e5e8"></div>
  <div class="a" style="left:209px;top:164px;width:25px;height:377px;background:#f0f0f0"></div>
  <div class="a" style="left:236px;top:164px;width:1px;height:377px;background:#f3f3f3"></div>
  <div class="a" style="left:0;top:541px;width:1262px;height:150px;background:#f8f8f8"></div>
  <div class="a" style="left:0;top:691px;width:1262px;height:96px;background:#f0f0f0"></div>
</div>
<!-- title -->
<svg style="left:795px;top:306px" width="22" height="24" viewBox="0 0 34 38">
  <polygon points="17,0 33,9.5 33,28.5 17,38 1,28.5 1,9.5" fill="#2f55a8"/>
  <polygon points="17,0 17,9 7,15 7,26 1,28.5 1,9.5" fill="#1a7ff0"/>
  <polygon points="17,9 26,14 26,17 20,17 17,19 20,21 26,21 26,24 17,29 8,24 8,14" fill="#fff"/>
</svg>
<div class="t" style="left:827px;top:310px;font-size:18px;color:#111">保存</div>
<svg style="left:2012px;top:310px" width="17" height="17" viewBox="0 0 17 17"><path d="M1,1 L16,16 M16,1 L1,16" stroke="#111" stroke-width="1.6"/></svg>
<!-- nav row -->
<svg style="left:805px;top:368px" width="20" height="18" viewBox="0 0 20 18"><path d="M19,9 H2 M9,1.5 L1.5,9 L9,16.5" fill="none" stroke="#8f8f8f" stroke-width="1.6"/></svg>
<svg style="left:859px;top:368px" width="20" height="18" viewBox="0 0 20 18"><path d="M1,9 H18 M11,1.5 L18.5,9 L11,16.5" fill="none" stroke="#8f8f8f" stroke-width="1.6"/></svg>
<svg style="left:906px;top:372px" width="15" height="9" viewBox="0 0 15 9"><path d="M1,1 L7.5,7.5 L14,1" fill="none" stroke="#8f8f8f" stroke-width="1.5"/></svg>
<svg style="left:950px;top:367px" width="20" height="22" viewBox="0 0 20 22"><path d="M10,21 V2 M1.5,10.5 L10,2 L18.5,10.5" fill="none" stroke="#555" stroke-width="1.7"/></svg>
<div class="a" style="left:991px;top:351px;width:726px;height:52px;border:1px solid #d9d9d9;background:#fff"></div>
<svg style="left:1004px;top:366px" width="23" height="19" viewBox="0 0 23 19"><path d="M0,2 Q0,0 2,0 H8 L10,2 H21 Q23,2 23,4 V17 Q23,19 21,19 H2 Q0,19 0,17 Z" fill="#f0b72f"/><rect x="0" y="5" width="23" height="14" rx="1" fill="#ffd55c"/></svg>
<div class="t" style="left:1035px;top:368px;font-size:18px;color:#333">›</div>
<div class="t" style="left:1056px;top:368px;font-size:18px;color:#1a1a1a">此电脑</div>
<div class="t" style="left:1121px;top:368px;font-size:18px;color:#333">›</div>
<div class="t" style="left:1141px;top:368px;font-size:18px;color:#1a1a1a">本地磁盘 (D:)</div>
<div class="t" style="left:1259px;top:368px;font-size:18px;color:#333">›</div>
<div class="t" style="left:1279px;top:368px;font-size:18px;color:#1a1a1a">扫描数据保存</div>
<div class="t" style="left:1398px;top:368px;font-size:18px;color:#333">›</div>
<div class="t" style="left:1418px;top:368px;font-size:18px;color:#1a1a1a">斑马彩模</div>
<svg style="left:1632px;top:372px" width="19" height="11" viewBox="0 0 19 11"><path d="M1,1 L9.5,9.5 L18,1" fill="none" stroke="#444" stroke-width="1.5"/></svg>
<svg style="left:1680px;top:367px" width="22" height="22" viewBox="0 0 22 22"><path d="M19,11 A8,8 0 1 1 16.5,5.2" fill="none" stroke="#444" stroke-width="1.6"/><path d="M17.5,1 V6.5 H12" fill="none" stroke="#444" stroke-width="1.6"/></svg>
<div class="a" style="left:1729px;top:351px;width:304px;height:52px;border:1px solid #d9d9d9;background:#fff"></div>
<div class="t" style="left:1740px;top:369px;font-size:18px;color:#6f6f6f">在 斑马彩模 中搜索</div>
<svg style="left:1993px;top:368px" width="19" height="19" viewBox="0 0 19 19"><circle cx="12" cy="7" r="5" fill="none" stroke="#666" stroke-width="2.6"/><path d="M8.5,10.5 L2,17" stroke="#666" stroke-width="2.8" stroke-linecap="round"/></svg>
<!-- toolbar -->
<div class="t" style="left:811px;top:428px;font-size:18px;color:#1b3556">组织</div>
<svg style="left:854px;top:435px" width="9" height="5" viewBox="0 0 9 5"><polygon points="0,0 9,0 4.5,5" fill="#1b3556"/></svg>
<div class="t" style="left:908px;top:428px;font-size:18px;color:#1b3556">新建文件夹</div>
<svg style="left:1911px;top:427px" width="20" height="20" viewBox="0 0 20 20"><rect x="1" y="1" width="17" height="14" rx="1" fill="#fff" stroke="#111" stroke-width="1.4"/><path d="M1,18.5 H18" stroke="#111" stroke-width="1.4"/></svg>
<svg style="left:1945px;top:435px" width="10" height="5" viewBox="0 0 10 5"><polygon points="0,0 10,0 5,5" fill="#1b3556"/></svg>
<div class="a" style="left:1998px;top:425px;width:24px;height:24px;border-radius:50%;background:radial-gradient(circle at 40% 35%,#2a9af0,#0a66c0)"></div>
<div class="t" style="left:2004px;top:428px;font-size:18px;color:#fff;font-weight:bold">?</div>
<!-- nav pane -->
<svg style="left:833px;top:484px" width="26" height="24" viewBox="0 0 26 24"><path d="M4,11 V23 H22 V11 L13,3 Z" fill="#c9c9c9"/><path d="M1.5,12 L13,2 L24.5,12" fill="none" stroke="#e07a1f" stroke-width="3" stroke-linejoin="round"/><rect x="10" y="15" width="6" height="8" fill="#9a9a9a"/></svg>
<div class="t" style="left:863px;top:486px;font-size:18px;color:#1a1a1a">主文件夹</div>
<svg style="left:834px;top:531px" width="25" height="25" viewBox="0 0 25 25"><rect x="3" y="3" width="21" height="21" rx="2" fill="#2e6fb8"/><rect x="0" y="0" width="21" height="21" rx="2" fill="#1d8ce0"/><polygon points="0,21 8,11 21,21" fill="#dfeefa"/><circle cx="14" cy="6" r="2.3" fill="#fff"/></svg>
<div class="t" style="left:863px;top:533px;font-size:18px;color:#1a1a1a">图库</div>
<svg style="left:804px;top:585px" width="10" height="15" viewBox="0 0 10 15"><path d="M1.5,1.5 L8,7.5 L1.5,13.5" fill="none" stroke="#777" stroke-width="1.5"/></svg>
<svg style="left:833px;top:582px" width="26" height="18" viewBox="0 0 26 18"><path d="M5,17 Q0,17 0,12 Q0,7 6,7 Q8,1 14,1 Q20,1 21,7 Q26,7 26,12 Q26,17 21,17 Z" fill="#1e7fe0"/><path d="M9,17 Q6,12 12,10 Q14,5 19,7 Q26,7 26,12 Q26,17 21,17 Z" fill="#3aa8f2"/></svg>
<div class="t" style="left:863px;top:583px;font-size:19px;color:#1a1a1a">OneDrive</div>
<div class="a" style="left:798px;top:638px;width:182px;height:2px;background:#dcdcdc"></div>
<svg style="left:834px;top:679px" width="24" height="19" viewBox="0 0 24 19"><rect x="0" y="0" width="24" height="19" rx="2" fill="#1a9fd8"/><rect x="0" y="0" width="24" height="19" rx="2" fill="url(#dk)"/><defs><linearGradient id="dk" x1="0" y1="0" x2="0" y2="1"><stop offset="0" stop-color="#3ec3f0"/><stop offset="1" stop-color="#1386c8"/></linearGradient></defs><rect x="2" y="2" width="2" height="2" fill="#fff"/><rect x="2" y="6" width="2" height="2" fill="#fff"/></svg>
<div class="t" style="left:863px;top:679px;font-size:18px;color:#1a1a1a">桌面</div>
<svg style="left:837px;top:724px" width="20" height="24" viewBox="0 0 20 24"><path d="M10,1 V17 M3,10 L10,17 L17,10 M2,22.5 H18" fill="none" stroke="#22a08a" stroke-width="2"/></svg>
<div class="t" style="left:863px;top:726px;font-size:18px;color:#1a1a1a">下载</div>
<svg style="left:837px;top:773px" width="19" height="24" viewBox="0 0 19 24"><rect x="0" y="0" width="19" height="24" rx="2" fill="#8aa0bb"/><path d="M4,7 H11 M4,11 H15 M4,15 H15" stroke="#fff" stroke-width="1.5"/><rect x="12" y="5" width="3" height="3" fill="#fff"/></svg>
<div class="t" style="left:863px;top:774px;font-size:18px;color:#1a1a1a">文档</div>
<svg style="left:834px;top:820px" width="24" height="20" viewBox="0 0 24 20"><rect x="0" y="0" width="24" height="24" rx="2" fill="#1d8ce0"/><polygon points="0,24 9,12 20,24" fill="#dfeefa"/><circle cx="17" cy="6" r="2.3" fill="#fff"/></svg>
<div class="t" style="left:863px;top:821px;font-size:18px;color:#1a1a1a">图片</div>
<svg style="left:969px;top:678px" width="19" height="19" viewBox="0 0 19 19"><path d="M10,2 L17,9 L14,10 L10,14 L9,17 L2,10 L5,9 L9,5 Z M6,13 L1,18" fill="#8e9499" stroke="#8e9499" stroke-width="1.5"/></svg>
<svg style="left:969px;top:726px" width="19" height="19" viewBox="0 0 19 19"><path d="M10,2 L17,9 L14,10 L10,14 L9,17 L2,10 L5,9 L9,5 Z M6,13 L1,18" fill="#8e9499" stroke="#8e9499" stroke-width="1.5"/></svg>
<svg style="left:969px;top:774px" width="19" height="19" viewBox="0 0 19 19"><path d="M10,2 L17,9 L14,10 L10,14 L9,17 L2,10 L5,9 L9,5 Z M6,13 L1,18" fill="#8e9499" stroke="#8e9499" stroke-width="1.5"/></svg>
<svg style="left:969px;top:821px" width="19" height="17" viewBox="0 0 19 17"><path d="M10,2 L17,9 L14,10 L10,14 L9,17 L2,10 L5,9 L9,5 Z M6,13 L1,18" fill="#8e9499" stroke="#8e9499" stroke-width="1.5"/></svg>
<div class="a" style="left:1002px;top:488px;width:5px;height:92px;border-radius:3px;background:#8a8a8a"></div>
<div class="t" style="left:1425px;top:488px;font-size:17.5px;color:#6b6b6b">没有与搜索条件匹配的项。</div>
<!-- filename / type -->
<div class="t" style="left:878px;top:864px;font-size:18px;color:#1a1a1a">文件名(N):</div>
<div class="a" style="left:971px;top:857px;width:1066px;height:32px;border:1px solid #7a7a7a;border-radius:2px;background:#fff"></div>
<div class="t" style="left:975px;top:864px;font-size:18px;color:#111">斑马彩色模型</div>
<svg style="left:2016px;top:868px" width="13" height="8" viewBox="0 0 13 8"><path d="M1,1 L6.5,6.5 L12,1" fill="none" stroke="#444" stroke-width="1.3"/></svg>
<div class="t" style="left:865px;top:898px;font-size:18px;color:#1a1a1a">保存类型(T):</div>
<div class="a" style="left:971px;top:892px;width:1066px;height:32px;border:1px solid #2f7dc2;border-radius:2px 2px 0 0;background:#cce4f7"></div>
<div class="t" style="left:975px;top:898px;font-size:18px;color:#111">网格文件(*.stl)</div>
<svg style="left:2016px;top:903px" width="13" height="8" viewBox="0 0 13 8"><path d="M1,1 L6.5,6.5 L12,1" fill="none" stroke="#444" stroke-width="1.3"/></svg>
<div class="a" style="left:971px;top:923px;width:1066px;height:147px;border:1px solid #2b7bbf;background:#fff;box-shadow:2px 2px 3px rgba(0,0,0,0.25)"></div>
<div class="a" style="left:972px;top:924px;width:1064px;height:24px;background:#0078d7"></div>
<div class="t" style="left:974px;top:927px;font-size:18px;color:#fff">网格文件(*.stl)</div>
<div class="t" style="left:974px;top:951px;font-size:18px;color:#111">网格文件(*.obj)</div>
<div class="t" style="left:974px;top:976px;font-size:18px;color:#111">网格文件（带贴图）(*.obj)</div>
<div class="t" style="left:974px;top:999px;font-size:18px;color:#111">网格文件(*.ply)</div>
<div class="t" style="left:974px;top:1023px;font-size:18px;color:#111">网格文件(*.sk)</div>
<div class="t" style="left:974px;top:1047px;font-size:18px;color:#111">贴图工程(*.map)</div>
<svg style="left:797px;top:1039px" width="15" height="10" viewBox="0 0 15 10"><path d="M1.5,8.5 L7.5,2.5 L13.5,8.5" fill="none" stroke="#444" stroke-width="2.6"/></svg>
<div class="t" style="left:821px;top:1036px;font-size:18px;color:#1a1a1a">隐藏文件夹</div>
<svg style="left:2031px;top:1073px" width="12" height="12" viewBox="0 0 12 12"><rect x="8" y="0" width="3" height="3" fill="#a0a0a0"/><rect x="4" y="4" width="3" height="3" fill="#a0a0a0"/><rect x="8" y="4" width="3" height="3" fill="#a0a0a0"/><rect x="0" y="8" width="3" height="3" fill="#a0a0a0"/><rect x="4" y="8" width="3" height="3" fill="#a0a0a0"/><rect x="8" y="8" width="3" height="3" fill="#a0a0a0"/></svg>

<!-- ============ STATUS BAR ============ -->
<div id="status"></div>
<svg style="left:20px;top:1487px" width="26" height="26" viewBox="0 0 26 26"><circle cx="13" cy="13" r="12.5" fill="#2fae4a"/><path d="M6.5,13 L11,17.5 L19.5,8.5" fill="none" stroke="#fff" stroke-width="2.6"/></svg>
<div class="t" style="left:60px;top:1491px;font-size:21px;color:#3b8fdc">设备已连接</div>
<svg style="left:195px;top:1489px" width="30" height="24" viewBox="0 0 30 24"><path d="M2,8 Q14,-2 26,8 M6,12 Q14,5 22,12 M10,16 Q14,12 18,16" fill="none" stroke="#e6e6e6" stroke-width="2.3"/><circle cx="14" cy="20" r="2" fill="#e6e6e6"/><circle cx="24" cy="18" r="5" fill="#e6e6e6"/><circle cx="24" cy="18" r="2" fill="#222"/></svg>
<div class="t" style="left:255px;top:1492px;font-size:18.5px;color:#e2e2e2">内存:&nbsp; 42%</div>
<div class="a" style="left:358px;top:1492px;width:2px;height:21px;background:#3b8fdc"></div>
<div class="t" style="left:375px;top:1492px;font-size:18.5px;color:#e2e2e2">磁盘空间:&nbsp; 71%</div>
<div class="a" style="left:520px;top:1492px;width:2px;height:21px;background:#3b8fdc"></div>
<div class="t" style="left:541px;top:1492px;font-size:18.5px;color:#e2e2e2">显存:&nbsp; 60%</div>
<div class="t" style="left:1842px;top:1492px;font-size:18.5px;color:#e8e8e8">选中面: 0</div>
<div class="a" style="left:1928px;top:1492px;width:2px;height:21px;background:#3b8fdc"></div>
<div class="t" style="left:1942px;top:1492px;font-size:18.5px;color:#e8e8e8">三角面: 262,864</div>
<div class="a" style="left:2085px;top:1492px;width:2px;height:21px;background:#3b8fdc"></div>
<div class="t" style="left:2100px;top:1492px;font-size:18.5px;color:#e8e8e8">SN: SK03IU0H0808</div>
<div class="t" style="left:2267px;top:1492px;font-size:18.5px;color:#e0262a">(演示样机)</div>
<div class="a" style="left:2364px;top:1492px;width:2px;height:21px;background:#3b8fdc"></div>
<div class="t" style="left:2378px;top:1492px;font-size:18.5px;color:#e8e8e8">(34.3°C)</div>
<div class="a" style="left:2456px;top:1492px;width:2px;height:21px;background:#3b8fdc"></div>
<div class="t" style="left:2470px;top:1492px;font-size:18.5px;color:#e8e8e8">V5.1.1.5</div>
<div id="botline"></div>
</body></html>
